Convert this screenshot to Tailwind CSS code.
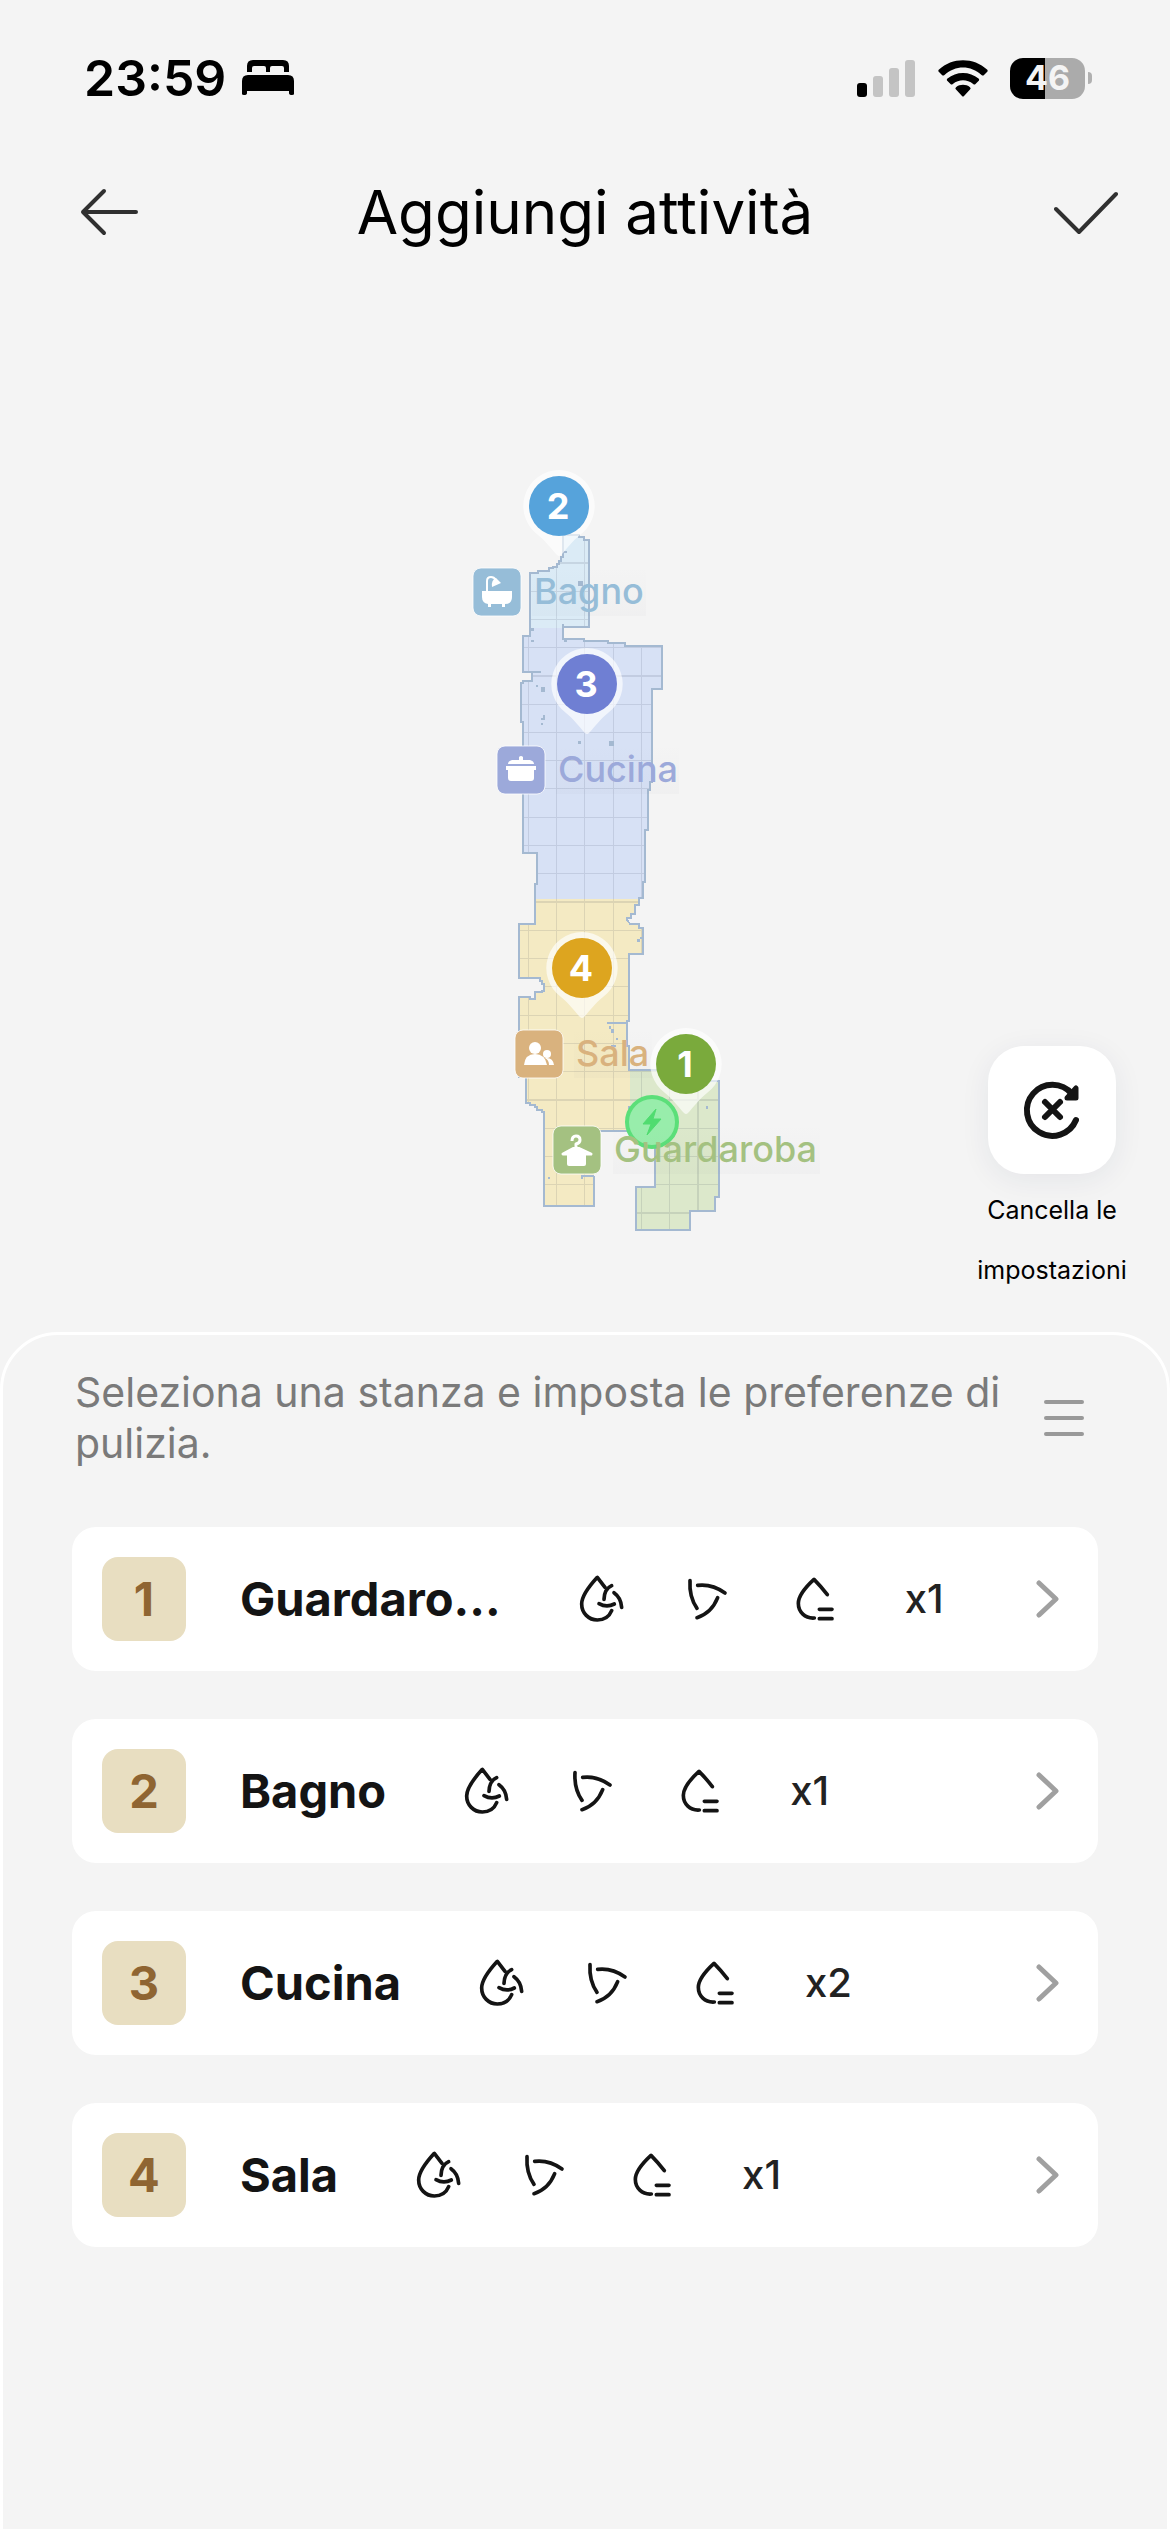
<!DOCTYPE html>
<html lang="it">
<head>
    <meta charset="UTF-8">
    <meta name="viewport" content="width=device-width, initial-scale=1.0">
    <title>Aggiungi attività</title>
    <script src="https://cdn.jsdelivr.net/npm/@tailwindcss/browser@4"></script>
</head>
<body class="bg-[#f4f4f4] text-black font-['Inter','Liberation_Sans',sans-serif]">
    <!-- Shared icons -->
    <svg class="hidden">
        <symbol id="icon-mop" viewBox="0 0 144 144">
            <g fill="none" stroke="#141414" stroke-width="11" stroke-linecap="round" stroke-linejoin="round">
                <path d="M84 37L61 7C38 32 14 62 14 87c0 27 21 48 47 48 20 0 36-11 43-28" />
                <path d="M104 32Q82 42 81 73M111 53Q132 68 134 97M66 86Q89 99 112 87" />
            </g>
        </symbol>
        <symbol id="icon-fan" viewBox="0 0 144 144">
            <path d="M15 17Q12 66 36 100M38 31Q82 26 120 54M98 68Q80 114 36 128" fill="none" stroke="#141414" stroke-width="11" stroke-linecap="round" />
        </symbol>
        <symbol id="icon-water" viewBox="0 0 144 144">
            <path d="M103 59Q84 34 63 13C38 36 16 62 16 85c0 26 20 46 48 44M79 103H117M79 131H117" fill="none" stroke="#141414" stroke-width="11" stroke-linecap="round" stroke-linejoin="round" />
        </symbol>
        <symbol id="icon-chevron" viewBox="0 0 24 40">
            <path d="M3 4L20 20L3 36" fill="none" stroke="#a0a0a0" stroke-width="5" stroke-linecap="round" stroke-linejoin="round" />
        </symbol>
        <symbol id="pin" viewBox="0 0 72 88">
            <path d="M36 0a36 36 0 0 1 21 65C49 71 43 80 38 85q-2 2-4 0C29 80 23 71 15 65A36 36 0 0 1 36 0Z" fill="#fff" fill-opacity=".65" />
            <circle cx="36" cy="36" r="30" fill="currentColor" />
        </symbol>
    </svg>

    <div class="min-h-screen flex flex-col">
        <!-- Status bar -->
        <div class="flex h-[156px] items-center justify-between pl-[84px] pr-[78px]">
            <div class="flex items-center gap-4">
                <span class="text-[50px] leading-none font-semibold">23:59</span>
                <svg class="w-[52px] h-9" viewBox="0 0 52 36">
                    <path d="M5 12V6Q5 0 11 0H41Q47 0 47 6V12H42V8Q42 6 40 6H30Q28 6 28 8V12H24V8Q24 6 22 6H12Q10 6 10 8V12Z" />
                    <path d="M0 21Q0 15 6 15H46Q52 15 52 21V34Q52 35 50 35Q47 35 47 33V31H5V33Q5 35 2 35Q0 35 0 34Z" />
                </svg>
            </div>
            <div class="flex items-center gap-[22px]">
                <svg class="w-[59px] h-[37px]" viewBox="0 0 59 37">
                    <rect x="0" y="23" width="10" height="14" rx="3" />
                    <g fill="#c4c4c4">
                        <rect x="16" y="16" width="10" height="21" rx="3" />
                        <rect x="32" y="8" width="10" height="29" rx="3" />
                        <rect x="48" y="0" width="10" height="37" rx="3" />
                    </g>
                </svg>
                <svg class="w-[50px] h-[37px]" viewBox="0 0 50 37">
                    <path d="M1 12a1.500 1.500 0 0 1 0-2.500C14-3 36-3 49 9.500a1.500 1.500 0 0 1 0 2.500L46 15q-1 1-2.500 0C33 5 17 5 6.500 15Q5 16 4 15Z" />
                    <path d="M9.500 21a1.500 1.500 0 0 1 0-2.500C18 11 32 11 40.500 18.500a1.500 1.500 0 0 1 0 2.500L37.500 24q-1 1-2.300 0C29 19 21 19 14.800 24q-1.300 1-2.300 0Z" />
                    <path d="M18 29.500a1.500 1.500 0 0 1 0-2.300c4-3.200 10-3.200 14 0a1.500 1.500 0 0 1 0 2.300L26 36q-1 1-2 0Z" />
                </svg>
                <div class="flex items-center gap-[3px]">
                    <div class="w-[75px] h-[41px] rounded-[13px] bg-[linear-gradient(90deg,#000_47%,#ababab_47%)] flex items-center justify-center text-[#f4f4f4] text-[34px] leading-none font-bold">46</div>
                    <div class="w-1 h-3 rounded-r-full bg-[#b0b0b0]"></div>
                </div>
            </div>
        </div>

        <!-- Title bar -->
        <header class="grid grid-cols-[160px_1fr_160px] h-28 items-center">
            <button type="button" aria-label="Indietro" class="justify-self-end w-20">
                <svg class="w-[60px] h-[50px]" viewBox="0 0 60 50" fill="none" stroke="#303030" stroke-width="4" stroke-linecap="round" stroke-linejoin="round">
                    <path d="M24 4L3 25L24 46M3 25H56" />
                </svg>
            </button>
            <h1 class="text-center text-[60px] leading-none">Aggiungi attività</h1>
            <button type="button" aria-label="Conferma" class="justify-self-end mr-[52px]">
                <svg class="w-16 h-[50px]" viewBox="0 0 64 50" fill="none" stroke="#303030" stroke-width="4" stroke-linecap="round" stroke-linejoin="round">
                    <path d="M2 22L25 45L62 7" />
                </svg>
            </button>
        </header>

        <!-- Map -->
        <section class="relative pt-[182px] pb-[82px]">
            <svg class="block mx-auto w-[510px] h-[800px]" viewBox="330 450 510 800" font-size="36">
                <!-- floor plan, drawn at three units per pixel -->
                <g transform="translate(450 450) scale(.33333)" shape-rendering="crispEdges">
                    <clipPath id="floor">
                        <path d="M340 255H388V262H402V270H417V531H340V567H403V573H475V580H525V588H636V716H607V995H600V1020H594V1140H586V1295H578V1345H568V1365H556V1393H543V1404H532V1412L540 1421H567V1435H579V1513H537V1713H531V1788H537V1860H700V1894H805V2240H794V2283H720V2340H558V2212H615V2043H432V2269H282V1986H275V1980H262V1972H255V1965H240V1958H227V1880H206V1641H240V1646H255V1627H275V1622H282V1602H277V1592H270V1584H206V1421H256V1302H261V1209H219V815H213V700H219V693H246V666H219V559H240V369H265V362H297V355H310V350H320V342H328V334H334V322H340Z" />
                    </clipPath>
                    <g clip-path="url(#floor)">
                        <rect x="200" y="240" width="640" height="294" fill="#dbebf6" />
                        <rect x="200" y="534" width="640" height="814" fill="#d7e1f5" />
                        <rect x="200" y="1348" width="640" height="940" fill="#f4eac3" />
                        <rect x="540" y="1858" width="300" height="500" fill="#dce8cb" />
                        <path d="M235 240V2350M319 240V2350M403 240V2350M490 240V2350M574 240V2350M658 240V2350M744 240V2350M200 339H840M200 424H840M200 508H840M200 592H840M200 678H840M200 763H840M200 847H840M200 931H840M200 1016H840M200 1102H840M200 1186H840M200 1270H840M200 1356H840M200 1441H840M200 1525H840M200 1609H840M200 1696H840M200 1780H840M200 1864H840M200 1950H840M200 2035H840M200 2119H840M200 2203H840M200 2289H840" stroke="#1e2840" stroke-opacity=".11" stroke-width="4" />
                    </g>
                    <path d="M340 255H388V262H402V270H417V531H340V567H403V573H475V580H525V588H636V716H607V995H600V1020H594V1140H586V1295H578V1345H568V1365H556V1393H543V1404H532V1412L540 1421H567V1435H579V1513H537V1713H531V1788H537V1860H700V1894H806V2240H794V2283H720V2340H558V2212H615V2043H432M432 2177V2269H282V1986H275V1980H262V1972H255V1965H240V1958H227V1880H206V1641H240V1646H255V1627H275V1622H282V1602H277V1592H270V1584H206V1421H256V1302H261V1209H219V815H213V700H219V693H246V666H219V559H240V369H265V362H297V355H310V350H320V342H328V334H334V322H340V255M340 531V522M246 666H272M471 1719H531M432 2177H395V2186" fill="none" stroke="#a4b9d1" stroke-width="6" />
                    <g fill="#a4b9d1">
                        <rect x="384" y="393" width="15" height="15" />
                        <rect x="340" y="303" width="11" height="6" />
                        <rect x="243" y="534" width="9" height="9" />
                        <rect x="243" y="570" width="9" height="6" />
                        <rect x="342" y="570" width="9" height="6" />
                        <rect x="258" y="705" width="6" height="6" />
                        <rect x="273" y="711" width="12" height="15" />
                        <path d="M279 795H285V810H273V803H279Z" />
                        <rect x="273" y="819" width="6" height="6" />
                        <rect x="384" y="873" width="9" height="9" />
                        <rect x="477" y="873" width="15" height="15" />
                        <rect x="561" y="1467" width="9" height="9" />
                        <rect x="570" y="1461" width="7" height="6" />
                        <rect x="477" y="1728" width="6" height="9" />
                        <rect x="483" y="1737" width="9" height="12" />
                        <rect x="498" y="1764" width="6" height="6" />
                        <rect x="483" y="1785" width="15" height="7" />
                        <rect x="768" y="1968" width="6" height="9" />
                        <rect x="294" y="2181" width="6" height="6" />
                        <rect x="534" y="1968" width="6" height="9" />
                    </g>
                </g>

                <!-- charging dock -->
                <circle cx="652" cy="1122" r="25" fill="#98edab" stroke="#5bdf79" stroke-width="4" />
                <path d="M656 1109L643 1124H651L647 1135L661 1119H653Z" fill="#50dc70" stroke="#50dc70" stroke-linejoin="round" />

                <!-- room labels -->
                <defs>
                    <linearGradient id="shade" x2="0" y2="1">
                        <stop offset="0" stop-color="#646478" stop-opacity="0" />
                        <stop offset="1" stop-color="#646478" stop-opacity=".03" />
                    </linearGradient>
                </defs>
                <g fill="url(#shade)">
                    <rect x="532" y="567" width="114" height="49" />
                    <rect x="556" y="745" width="123" height="49" />
                    <rect x="574" y="1029" width="78" height="49" />
                    <rect x="613" y="1125" width="207" height="49" />
                </g>
                <g stroke="#fff" stroke-opacity=".8">
                    <rect x="473" y="568" width="48" height="48" rx="8" fill="#96bdd8" />
                    <rect x="497" y="746" width="48" height="48" rx="8" fill="#9ca9da" />
                    <rect x="515" y="1030" width="48" height="48" rx="8" fill="#d9b27e" />
                    <rect x="553" y="1126" width="48" height="48" rx="8" fill="#a4c181" />
                </g>
                <g fill="#fff">
                    <path d="M482 591H512V597Q512 604 505 604V607H502V604H491V607H488V604Q482 603 482 597Z" />
                    <path d="M487 592V581Q487 577 491 577Q494 577 496 580" fill="none" stroke="#fff" stroke-width="2" />
                    <path d="M492 587Q491 580 496 578L501 583Z" />
                    <path d="M508 764Q508 761 512 760H519V757Q521 755 523 757V760H530Q534 761 534 764Z" />
                    <path d="M506 766H536V770H534V778Q534 781 531 781H511Q508 781 508 778V770H506Z" />
                    <circle cx="535" cy="1048" r="6" />
                    <path d="M524 1065Q525 1054 535 1054Q545 1054 547 1065Z" />
                    <circle cx="547" cy="1054" r="4" />
                    <path d="M549 1065Q549 1060 545 1058Q553 1057 554 1065Z" />
                    <path d="M567 1153H586V1164Q586 1166 584 1166H569Q567 1166 567 1164Z" />
                    <path d="M572 1141Q572 1136 576 1136Q580 1136 580 1140Q580 1143 576 1144V1147L591 1154H586M576 1147L563 1154H567" fill="none" stroke="#fff" stroke-width="3" stroke-linejoin="round" />
                    <path d="M576 1147L588 1154H565Z" />
                </g>
                <g font-weight="500">
                    <text x="534" y="604" fill="#96bdd8">Bagno</text>
                    <text x="558" y="782" fill="#9ca9da">Cucina</text>
                    <text x="576" y="1066" fill="#d9b27e">Sala</text>
                    <text x="614" y="1162" fill="#a4c181">Guardaroba</text>
                </g>

                <!-- order pins -->
                <use href="#pin" x="523" y="470" width="72" height="88" color="#56a3db" />
                <use href="#pin" x="551" y="648" width="72" height="88" color="#6f7fd3" />
                <use href="#pin" x="546" y="932" width="72" height="88" color="#dda51f" />
                <use href="#pin" x="650" y="1028" width="72" height="88" color="#7aaa3c" />
                <g fill="#fff" font-weight="700" text-anchor="middle">
                    <text x="558" y="519">2</text>
                    <text x="586" y="697">3</text>
                    <text x="581" y="981">4</text>
                    <text x="685" y="1077">1</text>
                </g>
            </svg>

            <button type="button" class="absolute top-[778px] right-[34px] w-[168px] flex flex-col items-center">
                <span class="size-32 rounded-[36px] bg-white shadow-[0_6px_30px_rgba(30,40,80,0.07)] flex items-center justify-center">
                    <svg class="size-16" viewBox="0 0 64 64" fill="none" stroke="#141414" stroke-width="6" stroke-linecap="round" stroke-linejoin="round">
                        <path d="M56 42A25.500 25.500 0 1 1 52 16M25 24L40 39M40 24L25 39" />
                        <path d="M56 10V20H47Z" fill="#141414" stroke-width="5" />
                    </svg>
                </span>
                <span class="mt-[6px] text-[25px] leading-[60px]">Cancella le impostazioni</span>
            </button>
        </section>

        <!-- Bottom sheet -->
        <main class="flex-1 border-[3px] border-white rounded-t-[58px] px-[69px] pt-8">
            <div class="flex items-center justify-between gap-6 pl-[3px] pr-[14px]">
                <p class="text-[41px] leading-[51px] text-[#7a7a7a]">Seleziona una stanza e imposta le preferenze di pulizia.</p>
                <button type="button" aria-label="Riordina" class="shrink-0">
                    <svg class="w-10 h-[38px]" viewBox="0 0 40 38" stroke="#999" stroke-width="4" stroke-linecap="round">
                        <path d="M2 3H38M2 19H38M2 35H38" />
                    </svg>
                </button>
            </div>

            <ul class="mt-[58px] flex flex-col gap-12">
                <li>
                    <a href="#" class="flex h-36 items-center rounded-3xl bg-white pl-[30px] pr-[38px]">
                        <span class="size-[84px] rounded-2xl bg-[#e8dec1] flex items-center justify-center text-[47px] font-bold text-[#8f6532]">1</span>
                        <span class="ml-[54px] text-[47px] font-bold text-[#141414]">Guardaro...</span>
                        <span class="ml-[76px] flex items-center gap-[60px]">
                            <svg class="size-12"><use href="#icon-mop" /></svg>
                            <svg class="size-12"><use href="#icon-fan" /></svg>
                            <svg class="size-12"><use href="#icon-water" /></svg>
                            <span class="ml-1 text-[40px] font-medium text-[#222]">x1</span>
                        </span>
                        <svg class="ml-auto w-6 h-10"><use href="#icon-chevron" /></svg>
                    </a>
                </li>
                <li>
                    <a href="#" class="flex h-36 items-center rounded-3xl bg-white pl-[30px] pr-[38px]">
                        <span class="size-[84px] rounded-2xl bg-[#e8dec1] flex items-center justify-center text-[47px] font-bold text-[#8f6532]">2</span>
                        <span class="ml-[54px] text-[47px] font-bold text-[#141414]">Bagno</span>
                        <span class="ml-[76px] flex items-center gap-[60px]">
                            <svg class="size-12"><use href="#icon-mop" /></svg>
                            <svg class="size-12"><use href="#icon-fan" /></svg>
                            <svg class="size-12"><use href="#icon-water" /></svg>
                            <span class="ml-1 text-[40px] font-medium text-[#222]">x1</span>
                        </span>
                        <svg class="ml-auto w-6 h-10"><use href="#icon-chevron" /></svg>
                    </a>
                </li>
                <li>
                    <a href="#" class="flex h-36 items-center rounded-3xl bg-white pl-[30px] pr-[38px]">
                        <span class="size-[84px] rounded-2xl bg-[#e8dec1] flex items-center justify-center text-[47px] font-bold text-[#8f6532]">3</span>
                        <span class="ml-[54px] text-[47px] font-bold text-[#141414]">Cucina</span>
                        <span class="ml-[76px] flex items-center gap-[60px]">
                            <svg class="size-12"><use href="#icon-mop" /></svg>
                            <svg class="size-12"><use href="#icon-fan" /></svg>
                            <svg class="size-12"><use href="#icon-water" /></svg>
                            <span class="ml-1 text-[40px] font-medium text-[#222]">x2</span>
                        </span>
                        <svg class="ml-auto w-6 h-10"><use href="#icon-chevron" /></svg>
                    </a>
                </li>
                <li>
                    <a href="#" class="flex h-36 items-center rounded-3xl bg-white pl-[30px] pr-[38px]">
                        <span class="size-[84px] rounded-2xl bg-[#e8dec1] flex items-center justify-center text-[47px] font-bold text-[#8f6532]">4</span>
                        <span class="ml-[54px] text-[47px] font-bold text-[#141414]">Sala</span>
                        <span class="ml-[76px] flex items-center gap-[60px]">
                            <svg class="size-12"><use href="#icon-mop" /></svg>
                            <svg class="size-12"><use href="#icon-fan" /></svg>
                            <svg class="size-12"><use href="#icon-water" /></svg>
                            <span class="ml-1 text-[40px] font-medium text-[#222]">x1</span>
                        </span>
                        <svg class="ml-auto w-6 h-10"><use href="#icon-chevron" /></svg>
                    </a>
                </li>
            </ul>
        </main>
    </div>
</body>
</html>
